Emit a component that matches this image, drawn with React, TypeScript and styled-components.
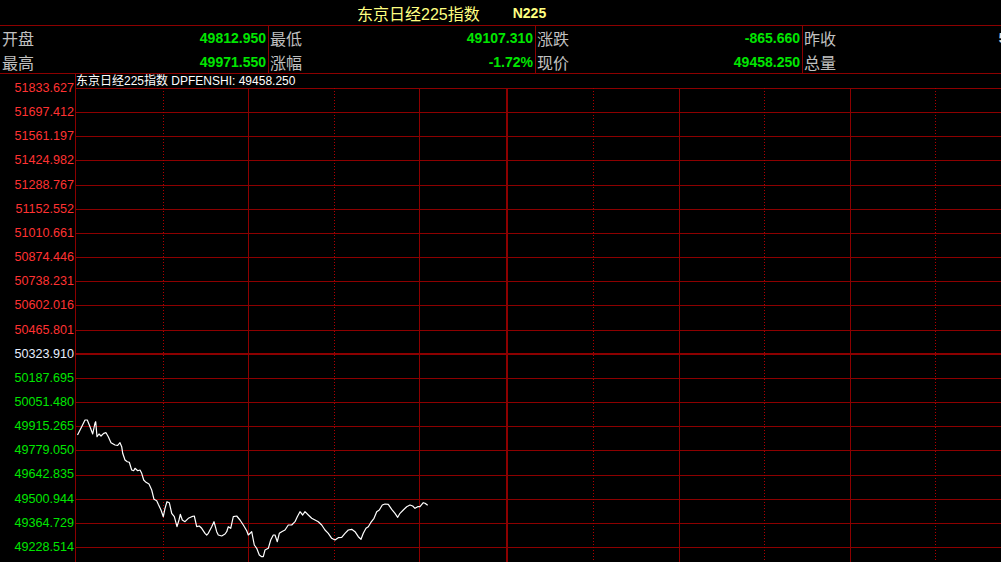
import React from 'react';
import styled, { createGlobalStyle } from 'styled-components';

const GRID = '#8c0000';
const ROW_H = 24.158;
const GREEN = '#00e600';
const RED = '#ff3232';
const PREV = '#e6eeff';

const Global = createGlobalStyle`
  html, body { margin: 0; padding: 0; background: #000; overflow: hidden; }
  body { font-family: "Liberation Sans", "Noto Sans CJK SC", sans-serif; }
`;

const Screen = styled.div`
  width: 1001px;
  height: 562px;
  background: #000;
  display: flex;
  flex-direction: column;
  overflow: hidden;
`;

const TitleBar = styled.div`
  height: 25px;
  border-bottom: 1px solid ${GRID};
  display: flex;
  align-items: center;
  padding-left: 357px;
  gap: 33px;
  flex-shrink: 0;
`;

const Title = styled.span`
  font-family: "Liberation Sans", "Noto Sans CJK SC", sans-serif;
  font-size: 16px;
  color: #ffff80;
  white-space: nowrap;
`;

const Code = styled.span`
  font-size: 14px;
  font-weight: bold;
  color: #ffff80;
`;

const QuoteTable = styled.div`
  display: grid;
  grid-template-columns: 269px 267px 267px 265px;
  grid-template-rows: 24px 23px;
  border-bottom: 1px solid ${GRID};
  flex-shrink: 0;
  width: 1068px;
`;

const Cell = styled.div<{ $first?: boolean }>`
  display: flex;
  align-items: center;
  justify-content: space-between;
  border-right: 1px solid ${GRID};
  padding: 0 2px 0 ${(p) => (p.$first ? '2px' : '1px')};
  overflow: hidden;
  white-space: nowrap;
`;

const Label = styled.span`
  font-family: "Noto Sans CJK SC", sans-serif;
  font-size: 16px;
  color: #c0c0c0;
`;

const Value = styled.span<{ $color: string }>`
  font-size: 14px;
  font-weight: bold;
  color: ${(p) => p.$color};
`;

const Body = styled.div`
  flex: 1;
  display: flex;
  min-height: 0;
`;

const Axis = styled.div`
  width: 75px;
  flex-shrink: 0;
  padding-top: 1.92px;
  display: flex;
  flex-direction: column;
`;

const AxisLabel = styled.div<{ $color: string }>`
  height: ${ROW_H}px;
  display: flex;
  align-items: center;
  justify-content: flex-end;
  padding-right: 1px;
  font-size: 12.6px;
  color: ${(p) => p.$color};
  flex-shrink: 0;
`;

const ChartPanel = styled.div`
  flex: 1;
  border-left: 1px solid ${GRID};
  display: flex;
  flex-direction: column;
  min-width: 0;
`;

const Legend = styled.div`
  height: 14px;
  line-height: 14px;
  font-size: 12px;
  color: #ffffff;
  white-space: nowrap;
  flex-shrink: 0;
`;

const ChartSvg = styled.svg`
  display: block;
  flex-shrink: 0;
`;

const quotes: { label: string; value: string; color: string }[][] = [
  [
    { label: '开盘', value: '49812.950', color: GREEN },
    { label: '最低', value: '49107.310', color: GREEN },
    { label: '涨跌', value: '-865.660', color: GREEN },
    { label: '昨收', value: '50323.910', color: '#e0e0e0' },
  ],
  [
    { label: '最高', value: '49971.550', color: GREEN },
    { label: '涨幅', value: '-1.72%', color: GREEN },
    { label: '现价', value: '49458.250', color: GREEN },
    { label: '总量', value: '', color: GREEN },
  ],
];

const axis = [
  '51833.627', '51697.412', '51561.197', '51424.982', '51288.767', '51152.552',
  '51010.661', '50874.446', '50738.231', '50602.016', '50465.801', '50323.910',
  '50187.695', '50051.480', '49915.265', '49779.050', '49642.835', '49500.944',
  '49364.729', '49228.514',
];

type VKind = 'dot' | 'solid' | 'thick';
const vLines: { x: number; kind: VKind }[] = [
  { x: 163, kind: 'dot' },
  { x: 248, kind: 'solid' },
  { x: 334, kind: 'dot' },
  { x: 419, kind: 'solid' },
  { x: 506, kind: 'thick' },
  { x: 593, kind: 'dot' },
  { x: 679, kind: 'solid' },
  { x: 764, kind: 'dot' },
  { x: 850, kind: 'solid' },
  { x: 935, kind: 'dot' },
];

const pts: [number, number][] = [
  [77.5, 435], [81.7, 426.7], [85, 420], [87.3, 420], [90, 426.7], [92.7, 434], [95, 423], [95.7, 421.7],
  [97, 436.7], [99, 434], [101, 436], [103.7, 433.3], [106, 432.7], [108.3, 436.7], [111, 442.7], [115, 445],
  [117.7, 445.3], [120, 442.7], [121.7, 446.7], [122.7, 453.3], [125, 460], [127.3, 461.7], [129.3, 462.3],
  [131.7, 470], [133.7, 470.7], [135, 468.3], [137.7, 470.7], [140, 470], [141.7, 473.3], [143.7, 480],
  [146, 482.3], [149, 484], [151.7, 490], [154, 499.3], [156.7, 500.7], [158.3, 504.3], [161, 510],
  [163.3, 516.7], [165, 508.3], [167, 501.7], [169.3, 502.7], [171.7, 513.3], [174.3, 516.7], [177, 526.7],
  [179, 520], [180.3, 514.3], [182.3, 520], [185, 521.7], [188.3, 518.3], [191.7, 516.7], [194.3, 516],
  [196.7, 526.7], [199.3, 526], [201.7, 528.3], [205, 533.3], [206.7, 535], [208.3, 533.3], [211.7, 526.7],
  [214, 521.7], [216.7, 531.7], [218.3, 535], [221.7, 536], [225, 534], [226.7, 531.7], [228.3, 526.7],
  [230.7, 528.3], [233.3, 516.7], [236.7, 516], [240, 520], [243.3, 525], [246.7, 530.7], [248.3, 535],
  [251.7, 531.7], [254.3, 545], [256.7, 548.3], [259.3, 555], [261.7, 556.7], [263.3, 556.7], [265, 550],
  [268.3, 548.3], [270.7, 540], [273.3, 535], [275, 535], [277.3, 541.7], [279.3, 533.3], [281.7, 531.7],
  [285, 530], [288.3, 525], [291.7, 525], [295, 521.7], [297.3, 516.7], [300, 511.7], [302.7, 515],
  [305, 511.7], [308.3, 515], [311.7, 518.3], [315, 520], [318.3, 521.7], [321.7, 525], [325, 530],
  [328.3, 533.3], [331.7, 538.3], [335, 540], [338.3, 537.7], [341.7, 537.3], [345, 533.3], [348.3, 530],
  [351.7, 529.3], [355, 531.7], [358.3, 536.7], [361, 539.3], [363.3, 533.3], [366, 528.3], [368.3, 526.7],
  [370.7, 522.7], [374, 518.3], [376.7, 511.7], [379.3, 510], [382.3, 505], [385, 504], [388.3, 504.3],
  [391.7, 509.3], [395, 513.3], [397.7, 517.3], [400, 513.3], [403.3, 510], [406.7, 506.7], [410, 505],
  [412.7, 506], [415, 508.3], [417.7, 506.7], [420, 506.7], [423.3, 502.7], [425, 503.3], [427.7, 505.3],
];

const OX = 76;
const OY = 88;
const W = 925;
const H = 474;

function axisColor(i: number) {
  if (i < 11) return RED;
  if (i === 11) return PREV;
  return GREEN;
}

export default function App() {
  const line = pts.map(([x, y]) => `${(x - OX).toFixed(1)},${(y - OY).toFixed(1)}`).join(' ');
  return (
    <Screen>
      <Global />
      <TitleBar>
        <Title>东京日经225指数</Title>
        <Code>N225</Code>
      </TitleBar>
      <QuoteTable>
        {quotes.map((row, r) =>
          row.map((q, c) => (
            <Cell key={`${r}-${c}`} $first={c === 0}>
              <Label>{q.label}</Label>
              <Value $color={q.color}>{q.value}</Value>
            </Cell>
          ))
        )}
      </QuoteTable>
      <Body>
        <Axis>
          {axis.map((v, i) => (
            <AxisLabel key={v} $color={axisColor(i)}>{v}</AxisLabel>
          ))}
        </Axis>
        <ChartPanel>
          <Legend>东京日经225指数 DPFENSHI: 49458.250</Legend>
          <ChartSvg width={W} height={H} viewBox={`0 0 ${W} ${H}`} shapeRendering="crispEdges">
            {axis.map((_, i) => {
              const y = Math.round(i * ROW_H);
              const thick = i === 11;
              return (
                <line
                  key={`h${i}`}
                  x1={0}
                  x2={W}
                  y1={thick ? y : y + 0.5}
                  y2={thick ? y : y + 0.5}
                  stroke={GRID}
                  strokeWidth={thick ? 2 : 1}
                />
              );
            })}
            {vLines.map(({ x, kind }) => {
              const sx = x - OX;
              const thick = kind === 'thick';
              const dotted = kind === 'dot';
              return (
                <line
                  key={`v${x}`}
                  x1={thick ? sx + 1 : sx + 0.5}
                  x2={thick ? sx + 1 : sx + 0.5}
                  y1={0}
                  y2={H}
                  stroke={dotted ? '#b00000' : GRID}
                  strokeWidth={thick ? 2 : 1}
                  strokeDasharray={dotted ? '1 2' : undefined}
                />
              );
            })}
            <polyline
              points={line}
              fill="none"
              stroke="#ffffff"
              strokeWidth={1.2}
              strokeLinejoin="round"
              shapeRendering="geometricPrecision"
            />
          </ChartSvg>
        </ChartPanel>
      </Body>
    </Screen>
  );
}
